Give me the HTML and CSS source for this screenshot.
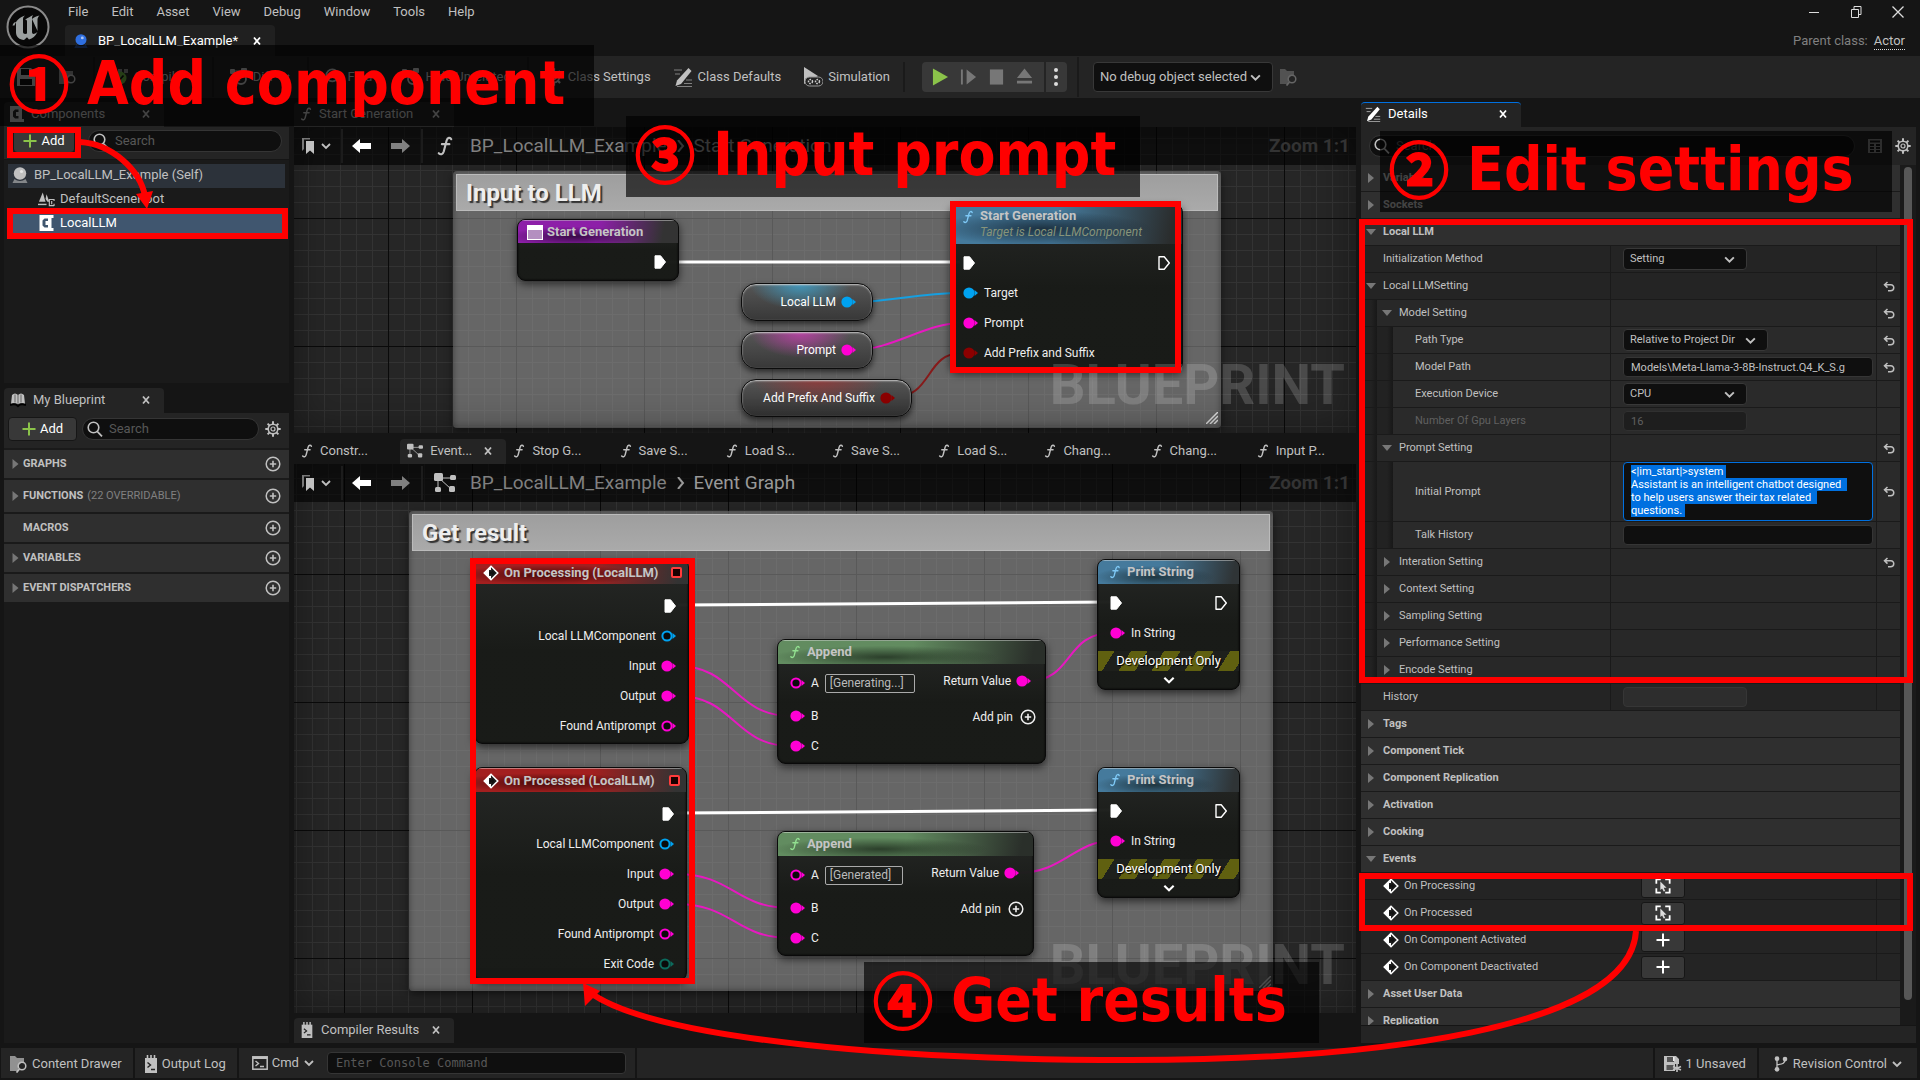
FILE: index.html
```html
<!DOCTYPE html>
<html lang="en">
<head>
<meta charset="utf-8">
<title>BP_LocalLLM_Example</title>
<link rel="stylesheet" href="styles.css">
</head>
<body>
<svg class="sprite" aria-hidden="true">
  <symbol id="i-f" viewBox="0 0 12 16"><path d="M11 2.6C10.2 1 8 1 7.3 3.6L5 12.4C4.300 14.800 2.400 15.200 1 13.800M3.500 6.500H9.500" fill="none" stroke="currentColor" stroke-width="1.700" stroke-linecap="round"/></symbol>
  <symbol id="i-chev" viewBox="0 0 12 12"><path d="M2 4l4 4 4-4" fill="none" stroke="currentColor" stroke-width="1.800"/></symbol>
  <symbol id="i-x" viewBox="0 0 10 10"><path d="M2 1.500L8 8.500M8 1.500L2 8.500" stroke="currentColor" stroke-width="1.800"/></symbol>
  <symbol id="i-search" viewBox="0 0 16 16"><circle cx="6.500" cy="6.500" r="5.300" fill="none" stroke="currentColor" stroke-width="1.600"/><path d="M10.300 10.500L15 15.400" stroke="currentColor" stroke-width="1.800"/></symbol>
  <symbol id="i-plus" viewBox="0 0 14 14"><path d="M7 0.500v13M.5 7h13" stroke="currentColor" stroke-width="2"/></symbol>
  <symbol id="i-pluscircle" viewBox="0 0 16 16"><circle cx="8" cy="8" r="6.800" fill="none" stroke="currentColor" stroke-width="1.500"/><path d="M8 4.800v6.400M4.800 8h6.400" stroke="currentColor" stroke-width="1.600"/></symbol>
  <symbol id="i-gear" viewBox="0 0 16 16"><circle cx="8" cy="8" r="4.800" fill="none" stroke="currentColor" stroke-width="1.600"/><circle cx="8" cy="8" r="2" fill="none" stroke="currentColor" stroke-width="1.200"/><path d="M8 .3v3M8 12.700v3M.3 8h3M12.700 8h3M2.600 2.600l2 2M11.400 11.400l2 2M13.400 2.600l-2 2M4.600 11.400l-2 2" stroke="currentColor" stroke-width="2"/></symbol>
  <symbol id="i-right" viewBox="0 0 7 10"><path d="M0.500 0L6.500 5 0.500 10z" fill="currentColor"/></symbol>
  <symbol id="i-down" viewBox="0 0 10 7"><path d="M0 .5h10L5 6.500z" fill="currentColor"/></symbol>
  <symbol id="i-exec" viewBox="0 0 12 14"><path d="M1 .8h5.600L11.500 7 6.600 13.200H1z" fill="#fff" stroke="#fff" stroke-linejoin="round"/></symbol>
  <symbol id="i-exec-open" viewBox="0 0 12 14"><path d="M1 .8h5.200L11.300 7 6.200 13.200H1z" fill="none" stroke="#fff" stroke-width="1.400" stroke-linejoin="round"/></symbol>
  <symbol id="i-pin" viewBox="0 0 15 12"><circle cx="6" cy="6" r="5.600" fill="currentColor"/><path d="M11.500 3L15 6l-3.500 3z" fill="currentColor"/></symbol>
  <symbol id="i-pin-open" viewBox="0 0 15 12"><circle cx="6" cy="6" r="4.600" fill="#0a0a0a" stroke="currentColor" stroke-width="2"/><path d="M11.500 3L15 6l-3.500 3z" fill="currentColor"/></symbol>
  <symbol id="i-event" viewBox="0 0 16 16"><path d="M8 1.200L14.800 8 8 14.800 1.200 8z" fill="#222" stroke="#fff" stroke-width="1.500"/><path d="M8 1.200V5H6v6h2v3.800L1.200 8z" fill="#fff"/><path d="M6 6.500h3v-1.500L12 8 9 11V9.500H6z" fill="#111"/></symbol>
  <symbol id="i-comp" viewBox="0 0 14 16"><path fill="currentColor" fill-rule="evenodd" d="M0 0h14v3h-2v10h2v3H0zM5 3.500L3 5.500v5l2 2h3.500v-2.500H6V6h2.500V3.500z"/></symbol>
  <symbol id="i-actor" viewBox="0 0 18 18"><circle cx="9" cy="7.500" r="6.200" fill="currentColor"/><circle cx="10.500" cy="5.500" r="1.600" fill="#fff" opacity=".6"/><path d="M3.500 13l-2 4h15l-2-4c-3 2.500-8 2.500-11 0z" fill="currentColor" opacity=".6"/></symbol>
  <symbol id="i-scene" viewBox="0 0 18 16"><path d="M5 1L1 11h7z" fill="currentColor"/><path d="M9 3l-1 5 2 3h2z" fill="currentColor"/><path d="M0 13h9v1.500H0z" fill="currentColor"/><path d="M17 8.500h-5V15h5M14.500 10v3.500M17 8v2M17 13v2.500" stroke="currentColor" fill="none" stroke-width="1.200"/></symbol>
  <symbol id="i-graph" viewBox="0 0 22 20"><path d="M5 5l12 11M6 5h11M4 6v11" stroke="currentColor" fill="none"/><rect x="0" y="0" width="9" height="8" rx="1.500" fill="currentColor"/><rect x="16" y="2" width="6" height="5" rx="1.500" fill="currentColor"/><rect x="1" y="14" width="6" height="5" rx="1.500" fill="currentColor"/><rect x="15" y="13" width="6" height="6" rx="1.500" fill="currentColor"/></symbol>
  <symbol id="i-book" viewBox="0 0 12 16"><path d="M0 0h8v1.500H2V11L0 13z" fill="#777"/><path d="M4 3h8v13l-4-3.500L4 16z" fill="currentColor"/></symbol>
  <symbol id="i-larrow" viewBox="0 0 19 14"><path d="M0 7L8 0v4h11v6H8v4z" fill="currentColor"/></symbol>
  <symbol id="i-rarrow" viewBox="0 0 19 14"><path d="M19 7L11 0v4H0v6h11v4z" fill="currentColor"/></symbol>
  <symbol id="i-pencil" viewBox="0 0 20 20"><path d="M15.500 1l3 3L8 17l-5.500 2 1.500-5.500z" fill="currentColor"/><path d="M1 3h8M2 7h5M13 13h6M11 16.500h8M4 19.500h15" stroke="currentColor" stroke-width="1.200" opacity=".6"/></symbol>
  <symbol id="i-browse" viewBox="0 0 18 18"><path d="M0 1h5l2 2h7v4a6 6 0 0 0-5 9H0z" fill="currentColor" opacity=".7"/><circle cx="12" cy="11" r="3.800" fill="none" stroke="currentColor" stroke-width="1.500"/><path d="M9.500 14l-3 3.500" stroke="currentColor" stroke-width="1.800"/></symbol>
  <symbol id="i-save" viewBox="0 0 18 18"><path d="M0 0h14l4 4v14H0z" fill="currentColor"/><path d="M4 1h8v6H4zM3 11h12v6H3z" fill="#111"/></symbol>
  <symbol id="i-unsaved" viewBox="0 0 18 18"><path d="M0 1h12l3 3v5h-4v7H0z" fill="currentColor"/><path d="M3 2h7v5H3zM2.500 10h7v5h-7z" fill="#555"/><path d="M9 2h1.500v4H9z" fill="#eee"/><path d="M13 9v8M9 11.500l8 3.500M17 11.500L9 15" stroke="currentColor" stroke-width="1.600"/></symbol>
  <symbol id="i-log" viewBox="0 0 14 18"><path d="M1 3h12v15H1z" fill="currentColor"/><path d="M3.500 0v4M7 0v4M10.500 0v4" stroke="currentColor" stroke-width="1.600"/><path d="M3.500 7.500L6.500 10l-3 2.500M7 14.500h4" stroke="#222" fill="none" stroke-width="1.400"/></symbol>
  <symbol id="i-cmd" viewBox="0 0 16 16"><rect x=".8" y="1.800" width="14.400" height="12.400" fill="none" stroke="currentColor" stroke-width="1.500"/><path d="M1 3h14" stroke="currentColor" stroke-width="2"/><path d="M3.500 6l3 2.500-3 2.500M8 11.500h4" stroke="currentColor" fill="none" stroke-width="1.400"/></symbol>
  <symbol id="i-branch" viewBox="0 0 16 18"><circle cx="3.500" cy="3" r="2.600" fill="currentColor"/><circle cx="3.500" cy="15" r="2.600" fill="currentColor"/><circle cx="12.500" cy="3.500" r="2.600" fill="currentColor"/><path d="M3.500 3v12M12.500 3c0 6-3 6-9 7" stroke="currentColor" stroke-width="1.500" fill="none"/></symbol>
  <symbol id="i-undo" viewBox="0 0 12 11"><path d="M4.500 1L1.500 3.800l3 2.800M1.500 3.800h6.300c4 0 4 6-.3 6H5" stroke="currentColor" stroke-width="1.500" fill="none"/></symbol>
  <symbol id="i-pick" viewBox="0 0 18 18"><path d="M1.500 6.500V1.500H6.500M11.500 1.500h5V6.500M16.500 11.500v5H11.500M6.500 16.500h-5V11.500" stroke="#fff" stroke-width="2" fill="none"/><path d="M6 4l7 7H9.800l1.700 3.500-1.700.8L8 11.700 6 13.500z" fill="#ddd"/></symbol>
  <symbol id="i-book2" viewBox="0 0 16 14"><path d="M2 2c2-2 4-2 6 0 2-2 4-2 6 0l1 9c-2-1-5-1-7 .5C6 10 3 10 1 11z" fill="currentColor"/><path d="M0 12c3-1 6-1 8 1 2-2 5-2 8-1" stroke="#000" stroke-width="2" fill="none"/><path d="M5 1.500v8M8 2v9M11 1.500v8" stroke="#666"/></symbol>
  <symbol id="i-table" viewBox="0 0 14 14"><path d="M0 0h14v14H0z" fill="currentColor"/><path d="M2 2.500h10M2 6h4M8 6h4M2 9h4M8 9h4M2 12h4M8 12h4" stroke="#161616" stroke-width="1.800"/></symbol>
  <symbol id="i-nodes" viewBox="0 0 18 18"><rect x="0" y="1" width="5" height="5" rx="1" fill="currentColor"/><rect x="11" y="0" width="6" height="5" rx="1" fill="currentColor"/><path d="M4 5l6 8M5 3h6" stroke="currentColor"/><circle cx="11" cy="11" r="5" fill="none" stroke="currentColor" stroke-width="1.800"/></symbol>
</svg>

<header class="titlebar">
  <svg class="logo" viewBox="0 0 44 44" role="img" aria-label="Unreal Engine"><circle cx="22" cy="22" r="20.500" fill="#080808" stroke="#8a8a8a" stroke-width="2"/><path d="M8.500 20.500C10 15.500 14 12 19 10.500c-1.500 1.300-2 2.300-2 4v12.500c0 1.500 1.800 2.600 4 1.500V16.500c0-1.500-.6-2-2-1.800 3-2 5.500-3.200 8.200-4.700-.9 1.200-1.200 2-1.200 3.500v13.500c0 1.500 1 2.200 2.500 1.800 1.200-.4 2-1 3-2-2 4.500-5 6.700-8.500 7.700l-2-2.200-3 2.700c-4.500-.3-8-3-8-7.500v-8.500c0-1.500-.3-2-1.200-1.700-.9.300-1.500 1.500-2.300 3.200zM26 14c2-2 5-3 7.500-3.500-1.500 1.500-2 2.700-2 4.500v11" fill="#9ba0a0"/></svg>
  <div class="title-main">
    <nav class="menu"><button>File</button><button>Edit</button><button>Asset</button><button>View</button><button>Debug</button><button>Window</button><button>Tools</button><button>Help</button></nav>
    <div class="doc-tab"><svg class="s16 blue"><use href="#i-actor"/></svg><span>BP_LocalLLM_Example*</span><button class="close" aria-label="Close"><svg><use href="#i-x"/></svg></button></div>
  </div>
  <div class="title-side">
    <div class="win"><button aria-label="Minimize"><svg viewBox="0 0 14 14"><path d="M2 7.500h10" stroke="#ddd"/></svg></button><button aria-label="Restore"><svg viewBox="0 0 14 14"><path d="M2.500 4.500h7v8h-7zM5 4V1.500h7v8H10" stroke="#ddd" fill="none"/></svg></button><button aria-label="Close window"><svg viewBox="0 0 14 14"><path d="M1.500 1.500l11 11M12.500 1.500l-11 11" stroke="#ddd" stroke-width="1.300"/></svg></button></div>
    <p class="parent">Parent class: <a href="#actor">Actor</a></p>
  </div>
</header>

<div class="toolbar">
  <button class="tool" aria-label="Save"><svg class="s18"><use href="#i-save"/></svg></button>
  <button class="tool second" aria-label="Browse"><svg class="s18"><use href="#i-browse"/></svg></button>
  <i class="sep"></i>
  <button class="tool compile"><svg class="s18" viewBox="0 0 18 18"><path d="M0 1h5v4H0zM7 1h4v4H7zM13 1h4v4h-4z" fill="#888"/><circle cx="9" cy="10" r="6.500" fill="#6db33f"/><path d="M5.500 10l2.500 2.500L12.500 7.500" stroke="#111" stroke-width="1.800" fill="none"/></svg>Compile</button>
  <i class="sep"></i>
  <button class="tool"><svg class="s18"><use href="#i-nodes"/></svg>Diff<svg class="s12"><use href="#i-chev"/></svg></button>
  <i class="sep"></i>
  <button class="tool"><svg class="s18"><use href="#i-search"/></svg>Find</button>
  <button class="tool hide"><svg class="s18"><use href="#i-nodes"/></svg>Hide Unrelated</button>
  <i class="sep"></i>
  <button class="tool"><svg class="s18"><use href="#i-gear"/></svg>Class Settings</button>
  <button class="tool"><svg class="s20"><use href="#i-pencil"/></svg>Class Defaults</button>
  <button class="tool"><svg class="s20" viewBox="0 0 20 20"><path d="M1 0l14 9L1 17z" fill="currentColor"/><rect x="2" y="10" width="18" height="9" rx="4.500" fill="#242424" stroke="#999"/><circle cx="7.500" cy="14.500" r="2" fill="none" stroke="#ccc" stroke-width="1.500" stroke-dasharray="1.500 1"/><circle cx="14.500" cy="14.500" r="2" fill="none" stroke="#ccc" stroke-width="1.500" stroke-dasharray="1.500 1"/></svg>Simulation</button>
  <i class="sep short"></i>
  <div class="play">
    <button aria-label="Play"><svg viewBox="0 0 18 18"><path d="M1 0l16 9L1 18z" fill="#8bc34a"/></svg></button>
    <button aria-label="Step"><svg viewBox="0 0 18 18"><path d="M1 1h2v16H1zM7 1l10 8-10 8z" fill="#777"/></svg></button>
    <button aria-label="Stop"><svg viewBox="0 0 18 18"><path d="M2 1h14v16H2z" fill="#777"/></svg></button>
    <button aria-label="Eject"><svg viewBox="0 0 18 18"><path d="M9 0l8 10H1zM1 13h16v3H1z" fill="#777"/></svg></button>
    <button class="dots" aria-label="Play options"><svg viewBox="0 0 6 18"><circle cx="3" cy="2" r="2"/><circle cx="3" cy="9" r="2"/><circle cx="3" cy="16" r="2"/></svg></button>
  </div>
  <i class="sep"></i>
  <div class="pick debug"><select aria-label="Debug object"><option>No debug object selected</option></select><svg><use href="#i-chev"/></svg></div>
  <svg class="s18 dim"><use href="#i-browse"/></svg>
</div>

<main class="main">
  <section class="left">
    <div class="tabs"><div class="tab on"><svg class="s14"><use href="#i-comp"/></svg><span>Components</span><button class="close" aria-label="Close"><svg><use href="#i-x"/></svg></button></div></div>
    <div class="panel components">
      <div class="tools"><button class="add"><svg><use href="#i-plus"/></svg>Add</button><label class="search"><svg><use href="#i-search"/></svg><input type="text" placeholder="Search" aria-label="Search components"></label></div>
      <ul class="tree">
        <li class="self"><svg class="s18"><use href="#i-actor"/></svg>BP_LocalLLM_Example (Self)</li>
        <li class="child"><svg class="s18"><use href="#i-scene"/></svg>DefaultSceneRoot</li>
        <li class="child sel"><svg class="s18"><use href="#i-comp"/></svg>LocalLLM</li>
      </ul>
    </div>
    <div class="tabs low"><div class="tab on"><svg class="s16"><use href="#i-book2"/></svg><span>My Blueprint</span><button class="close" aria-label="Close"><svg><use href="#i-x"/></svg></button></div></div>
    <div class="panel blueprint">
      <div class="tools"><button class="add wide"><svg><use href="#i-plus"/></svg>Add</button><label class="search"><svg><use href="#i-search"/></svg><input type="text" placeholder="Search" aria-label="Search blueprint"></label><button class="icon" aria-label="Settings"><svg class="s16"><use href="#i-gear"/></svg></button></div>
      <ul class="sections">
        <li><svg class="tri"><use href="#i-right"/></svg><b>GRAPHS</b><button class="icon" aria-label="Add graph"><svg class="s16"><use href="#i-pluscircle"/></svg></button></li>
        <li class="tall"><svg class="tri"><use href="#i-right"/></svg><b>FUNCTIONS</b><span>(22 OVERRIDABLE)</span><button class="icon" aria-label="Add function"><svg class="s16"><use href="#i-pluscircle"/></svg></button></li>
        <li><svg class="tri"></svg><b>MACROS</b><button class="icon" aria-label="Add macro"><svg class="s16"><use href="#i-pluscircle"/></svg></button></li>
        <li><svg class="tri"><use href="#i-right"/></svg><b>VARIABLES</b><button class="icon" aria-label="Add variable"><svg class="s16"><use href="#i-pluscircle"/></svg></button></li>
        <li><svg class="tri"><use href="#i-right"/></svg><b>EVENT DISPATCHERS</b><button class="icon" aria-label="Add dispatcher"><svg class="s16"><use href="#i-pluscircle"/></svg></button></li>
      </ul>
    </div>
  </section>

  <section class="center">
    <div class="tabs"><div class="tab on"><svg class="f"><use href="#i-f"/></svg><span>Start Generation</span><button class="close" aria-label="Close"><svg><use href="#i-x"/></svg></button></div></div>
    <div class="canvas one">
      <div class="comment c1"><h2>Input to LLM</h2></div>
      <svg class="handle h1" viewBox="0 0 12 12"><path d="M0 12L12 0M4 12l8-8M8 12l4-4" stroke="#ddd" stroke-width="1.500"/></svg>
      <svg class="wires"><g fill="none"><path d="M370 135H666" stroke="#fff" stroke-width="3"/><path d="M558 175C600 175 620 166 668 166" stroke="#169fe0" stroke-width="2"/><path d="M558 223C600 223 630 196 668 196" stroke="#e619c0" stroke-width="2"/><path d="M597 271C640 271 630 226 668 226" stroke="#861a1a" stroke-width="2"/></g></svg>
      <article class="node entry"><h3><svg class="box" viewBox="0 0 16 15"><rect x=".5" y=".5" width="15" height="14" fill="#b48fc0" stroke="#fff"/><path d="M0 0h16v5H0z" fill="#fff"/></svg>Start Generation</h3><div class="pins"><p class="out"><svg class="ex"><use href="#i-exec"/></svg></p></div></article>
      <article class="var v1"><span>Local LLM</span><svg class="pin obj"><use href="#i-pin"/></svg></article>
      <article class="var v2"><span>Prompt</span><svg class="pin str"><use href="#i-pin"/></svg></article>
      <article class="var v3"><span>Add Prefix And Suffix</span><svg class="pin bool"><use href="#i-pin"/></svg></article>
      <article class="node call"><h3 class="double"><svg class="f"><use href="#i-f"/></svg><span>Start Generation<em>Target is Local LLMComponent</em></span></h3>
        <div class="pins"><p class="both"><svg class="ex"><use href="#i-exec"/></svg><svg class="ex"><use href="#i-exec-open"/></svg></p><p><svg class="pin obj"><use href="#i-pin"/></svg>Target</p><p><svg class="pin str"><use href="#i-pin"/></svg>Prompt</p><p><svg class="pin bool"><use href="#i-pin"/></svg>Add Prefix and Suffix</p></div></article>
      <div class="mark">BLUEPRINT</div>
      <div class="crumbs"><button class="icon bm" aria-label="Bookmarks"><svg><use href="#i-book"/></svg><svg class="s12"><use href="#i-chev"/></svg></button><i></i><button class="icon" aria-label="Back"><svg class="arr white"><use href="#i-larrow"/></svg></button><button class="icon" aria-label="Forward"><svg class="arr"><use href="#i-rarrow"/></svg></button><i></i><svg class="kind"><use href="#i-f"/></svg><span>BP_LocalLLM_Example</span><svg class="s12"><path d="M3 0l5 6-5 6" fill="none" stroke="#999" stroke-width="2"/></svg><span class="here">Start Generation</span><b>Zoom 1:1</b></div>
    </div>
    <div class="tabs many">
      <div class="tab"><svg class="f"><use href="#i-f"/></svg><span>Constr...</span></div>
      <div class="tab on"><svg class="s16"><use href="#i-graph"/></svg><span>Event...</span><button class="close" aria-label="Close"><svg><use href="#i-x"/></svg></button></div>
      <div class="tab"><svg class="f"><use href="#i-f"/></svg><span>Stop G...</span></div>
      <div class="tab"><svg class="f"><use href="#i-f"/></svg><span>Save S...</span></div>
      <div class="tab"><svg class="f"><use href="#i-f"/></svg><span>Load S...</span></div>
      <div class="tab"><svg class="f"><use href="#i-f"/></svg><span>Save S...</span></div>
      <div class="tab"><svg class="f"><use href="#i-f"/></svg><span>Load S...</span></div>
      <div class="tab"><svg class="f"><use href="#i-f"/></svg><span>Chang...</span></div>
      <div class="tab"><svg class="f"><use href="#i-f"/></svg><span>Chang...</span></div>
      <div class="tab"><svg class="f"><use href="#i-f"/></svg><span>Input P...</span></div>
    </div>
    <div class="canvas two">
      <div class="comment c2"><h2>Get result</h2></div>
      <svg class="handle h2" viewBox="0 0 12 12"><path d="M0 12L12 0M4 12l8-8M8 12l4-4" stroke="#ddd" stroke-width="1.500"/></svg>
      <svg class="wires"><g fill="none" stroke="#e619c0" stroke-width="2"><path d="M384 141L816 138" stroke="#fff" stroke-width="3"/><path d="M381 349L816 346" stroke="#fff" stroke-width="3"/><path d="M384 202C440 202 440 252 497 252"/><path d="M384 232C440 232 440 282 497 282"/><path d="M381 410C440 410 440 444 497 444"/><path d="M381 440C440 440 440 474 497 474"/><path d="M734 217C780 217 770 169 818 169"/><path d="M723 409C770 409 780 377 818 377"/></g></svg>
      <article class="node ev e1"><h3><svg class="s16"><use href="#i-event"/></svg>On Processing (LocalLLM)<i></i></h3><div class="pins"><p class="out"><svg class="ex"><use href="#i-exec"/></svg></p><p class="out">Local LLMComponent<svg class="pin obj"><use href="#i-pin-open"/></svg></p><p class="out">Input<svg class="pin str"><use href="#i-pin"/></svg></p><p class="out">Output<svg class="pin str"><use href="#i-pin"/></svg></p><p class="out">Found Antiprompt<svg class="pin str"><use href="#i-pin-open"/></svg></p></div></article>
      <article class="node ev e2"><h3><svg class="s16"><use href="#i-event"/></svg>On Processed (LocalLLM)<i></i></h3><div class="pins"><p class="out"><svg class="ex"><use href="#i-exec"/></svg></p><p class="out">Local LLMComponent<svg class="pin obj"><use href="#i-pin-open"/></svg></p><p class="out">Input<svg class="pin str"><use href="#i-pin"/></svg></p><p class="out">Output<svg class="pin str"><use href="#i-pin"/></svg></p><p class="out">Found Antiprompt<svg class="pin str"><use href="#i-pin-open"/></svg></p><p class="out">Exit Code<svg class="pin int"><use href="#i-pin-open"/></svg></p></div></article>
      <article class="node pure a1"><h3><svg class="f"><use href="#i-f"/></svg>Append</h3><div class="pins split"><div><p><svg class="pin str"><use href="#i-pin-open"/></svg><label for="a1">A</label><input id="a1" class="lit long" value="[Generating...]"></p><p><svg class="pin str"><use href="#i-pin"/></svg>B</p><p><svg class="pin str"><use href="#i-pin"/></svg>C</p></div><div><p class="out">Return Value<svg class="pin str"><use href="#i-pin"/></svg></p><p class="out addpin"><button>Add pin<svg class="s16"><use href="#i-pluscircle"/></svg></button></p></div></div></article>
      <article class="node pure a2"><h3><svg class="f"><use href="#i-f"/></svg>Append</h3><div class="pins split"><div><p><svg class="pin str"><use href="#i-pin-open"/></svg><label for="a2">A</label><input id="a2" class="lit" value="[Generated]"></p><p><svg class="pin str"><use href="#i-pin"/></svg>B</p><p><svg class="pin str"><use href="#i-pin"/></svg>C</p></div><div><p class="out">Return Value<svg class="pin str"><use href="#i-pin"/></svg></p><p class="out addpin"><button>Add pin<svg class="s16"><use href="#i-pluscircle"/></svg></button></p></div></div></article>
      <article class="node print p1"><h3><svg class="f"><use href="#i-f"/></svg>Print String</h3><div class="pins"><p class="both"><svg class="ex"><use href="#i-exec"/></svg><svg class="ex"><use href="#i-exec-open"/></svg></p><p><svg class="pin str"><use href="#i-pin"/></svg>In String</p></div><div class="dev">Development Only</div><svg class="more"><use href="#i-chev"/></svg></article>
      <article class="node print p2"><h3><svg class="f"><use href="#i-f"/></svg>Print String</h3><div class="pins"><p class="both"><svg class="ex"><use href="#i-exec"/></svg><svg class="ex"><use href="#i-exec-open"/></svg></p><p><svg class="pin str"><use href="#i-pin"/></svg>In String</p></div><div class="dev">Development Only</div><svg class="more"><use href="#i-chev"/></svg></article>
      <div class="mark">BLUEPRINT</div>
      <div class="crumbs"><button class="icon bm" aria-label="Bookmarks"><svg><use href="#i-book"/></svg><svg class="s12"><use href="#i-chev"/></svg></button><i></i><button class="icon" aria-label="Back"><svg class="arr white"><use href="#i-larrow"/></svg></button><button class="icon" aria-label="Forward"><svg class="arr"><use href="#i-rarrow"/></svg></button><i></i><svg class="kind"><use href="#i-graph"/></svg><span>BP_LocalLLM_Example</span><svg class="s12"><path d="M3 0l5 6-5 6" fill="none" stroke="#999" stroke-width="2"/></svg><span class="here">Event Graph</span><b>Zoom 1:1</b></div>
    </div>
    <div class="tabs low"><div class="tab on"><svg class="s14"><use href="#i-log"/></svg><span>Compiler Results</span><button class="close" aria-label="Close"><svg><use href="#i-x"/></svg></button></div></div>
  </section>

  <section class="right">
    <div class="tabs"><div class="tab on active"><svg class="s16"><use href="#i-pencil"/></svg><span>Details</span><button class="close" aria-label="Close"><svg><use href="#i-x"/></svg></button></div></div>
    <div class="tools details-tools"><label class="search"><svg><use href="#i-search"/></svg><input type="text" placeholder="Search" aria-label="Search details"></label><button class="icon" aria-label="Property matrix"><svg class="s14"><use href="#i-table"/></svg></button><button class="icon" aria-label="Settings"><svg class="s16"><use href="#i-gear"/></svg></button></div>
    <div class="scroll">
      <div class="rows">
        <div class="cat"><svg class="tri"><use href="#i-right"/></svg>Variable</div>
        <div class="cat"><svg class="tri"><use href="#i-right"/></svg>Sockets</div>
        <div class="cat"><svg class="tri"><use href="#i-down"/></svg>Local LLM</div>
        <div class="row"><div class="name"><label for="init">Initialization Method</label></div><div class="val"><div class="pick"><select id="init"><option>Setting</option></select><svg><use href="#i-chev"/></svg></div></div><div class="rst"></div></div>
        <div class="row"><div class="name"><svg class="tri"><use href="#i-down"/></svg>Local LLMSetting</div><div class="val"></div><div class="rst"><svg><use href="#i-undo"/></svg></div></div>
        <div class="row l2"><div class="name"><svg class="tri"><use href="#i-down"/></svg>Model Setting</div><div class="val"></div><div class="rst"><svg><use href="#i-undo"/></svg></div></div>
        <div class="row l3"><div class="name"><label for="ptype">Path Type</label></div><div class="val"><div class="pick path"><select id="ptype"><option>Relative to Project Dir</option></select><svg><use href="#i-chev"/></svg></div></div><div class="rst"><svg><use href="#i-undo"/></svg></div></div>
        <div class="row l3"><div class="name"><label for="mpath">Model Path</label></div><div class="val"><input id="mpath" class="field" value="Models\Meta-Llama-3-8B-Instruct.Q4_K_S.g"></div><div class="rst"><svg><use href="#i-undo"/></svg></div></div>
        <div class="row l3"><div class="name"><label for="dev">Execution Device</label></div><div class="val"><div class="pick"><select id="dev"><option>CPU</option></select><svg><use href="#i-chev"/></svg></div></div><div class="rst"></div></div>
        <div class="row l3 off"><div class="name"><label for="gpu">Number Of Gpu Layers</label></div><div class="val"><input id="gpu" class="field small" value="16" disabled></div><div class="rst"></div></div>
        <div class="row l2"><div class="name"><svg class="tri"><use href="#i-down"/></svg>Prompt Setting</div><div class="val"></div><div class="rst"><svg><use href="#i-undo"/></svg></div></div>
        <div class="row l3 big"><div class="name"><label for="prompt">Initial Prompt</label></div><div class="val"><textarea id="prompt" class="field area" spellcheck="false">&lt;|im_start|&gt;system
Assistant is an intelligent chatbot designed to help users answer their tax related questions. </textarea></div><div class="rst"><svg><use href="#i-undo"/></svg></div></div>
        <div class="row l3"><div class="name"><label for="talk">Talk History</label></div><div class="val"><input id="talk" class="field"></div><div class="rst"></div></div>
        <div class="row l2"><div class="name"><svg class="tri"><use href="#i-right"/></svg>Interation Setting</div><div class="val"></div><div class="rst"><svg><use href="#i-undo"/></svg></div></div>
        <div class="row l2"><div class="name"><svg class="tri"><use href="#i-right"/></svg>Context Setting</div><div class="val"></div><div class="rst"></div></div>
        <div class="row l2"><div class="name"><svg class="tri"><use href="#i-right"/></svg>Sampling Setting</div><div class="val"></div><div class="rst"></div></div>
        <div class="row l2"><div class="name"><svg class="tri"><use href="#i-right"/></svg>Performance Setting</div><div class="val"></div><div class="rst"></div></div>
        <div class="row l2"><div class="name"><svg class="tri"><use href="#i-right"/></svg>Encode Setting</div><div class="val"></div><div class="rst"></div></div>
        <div class="row"><div class="name"><label for="hist">History</label></div><div class="val"><input id="hist" class="field small flat" disabled></div><div class="rst"></div></div>
        <div class="cat"><svg class="tri"><use href="#i-right"/></svg>Tags</div>
        <div class="cat"><svg class="tri"><use href="#i-right"/></svg>Component Tick</div>
        <div class="cat"><svg class="tri"><use href="#i-right"/></svg>Component Replication</div>
        <div class="cat"><svg class="tri"><use href="#i-right"/></svg>Activation</div>
        <div class="cat"><svg class="tri"><use href="#i-right"/></svg>Cooking</div>
        <div class="cat"><svg class="tri"><use href="#i-down"/></svg>Events</div>
        <div class="row event"><div class="name"><svg class="s16"><use href="#i-event"/></svg>On Processing</div><div class="val"><button aria-label="View event"><svg class="s16"><use href="#i-pick"/></svg></button></div><div class="rst"></div></div>
        <div class="row event"><div class="name"><svg class="s16"><use href="#i-event"/></svg>On Processed</div><div class="val"><button aria-label="View event"><svg class="s16"><use href="#i-pick"/></svg></button></div><div class="rst"></div></div>
        <div class="row event"><div class="name"><svg class="s16"><use href="#i-event"/></svg>On Component Activated</div><div class="val"><button aria-label="Add event"><svg class="s14"><use href="#i-plus"/></svg></button></div><div class="rst"></div></div>
        <div class="row event"><div class="name"><svg class="s16"><use href="#i-event"/></svg>On Component Deactivated</div><div class="val"><button aria-label="Add event"><svg class="s14"><use href="#i-plus"/></svg></button></div><div class="rst"></div></div>
        <div class="cat"><svg class="tri"><use href="#i-right"/></svg>Asset User Data</div>
        <div class="cat"><svg class="tri"><use href="#i-right"/></svg>Replication</div>
      </div>
      <div class="bar"><i></i></div>
    </div>
    <div class="foot"></div>
  </section>
</main>

<footer class="status">
  <button><svg class="s18"><use href="#i-browse"/></svg>Content Drawer</button>
  <button><svg class="s18 narrow"><use href="#i-log"/></svg>Output Log</button>
  <div class="console"><button><svg class="s16"><use href="#i-cmd"/></svg>Cmd<svg class="s12"><use href="#i-chev"/></svg></button><input type="text" placeholder="Enter Console Command" aria-label="Console command"></div>
  <div class="fill"></div>
  <button><svg class="s18"><use href="#i-unsaved"/></svg>1 Unsaved</button>
  <button class="rev"><svg class="s16"><use href="#i-branch"/></svg>Revision Control<svg class="s12"><use href="#i-chev"/></svg></button>
</footer>

<div class="notes">
  <div class="note n1"><span>①</span>Add component</div>
  <div class="note n2"><span>②</span>Edit settings</div>
  <div class="note n3"><span>③</span>Input prompt</div>
  <div class="note n4"><span>④</span>Get results</div>
  <div class="frame f1"></div><div class="frame f2"></div><div class="frame f3"></div><div class="frame f4"></div><div class="frame f5"></div><div class="frame f6"></div>
  <svg class="arrows"><g fill="none" stroke="#f00" stroke-width="6"><path d="M80 142C112 144 140 170 145 196"/><path d="M1636 931C1630 1030 1370 1060 1130 1060C900 1060 660 1040 592 994"/></g><path d="M136 194l17-3-6 18zM583 983l17 8-15 15z" fill="#f00"/></svg>
</div>
<script src="app.js"></script>
</body>
</html>
```
FILE: app.js
```js
const prompt = document.getElementById('prompt');
prompt.focus({ preventScroll: true });
prompt.select();
```
FILE: styles.css
```css
* { box-sizing: border-box; }
html, body { height: 100%; }
body { margin: 0; display: flex; flex-direction: column; position: relative; overflow: hidden; background: #151515; color: #c0c0c0; font: 13px/16px Roboto, sans-serif; }
button { font: inherit; color: inherit; background: none; border: 0; padding: 0; display: inline-flex; align-items: center; justify-content: center; }
input, select, textarea { font: inherit; color: inherit; min-width: 0; outline: 0; }
ul, p, h2, h3 { margin: 0; padding: 0; list-style: none; }
svg { display: block; flex: none; }
.sprite { position: absolute; width: 0; height: 0; }
.s12 { width: 12px; height: 12px; }
.s14 { width: 14px; height: 16px; }
.s16 { width: 16px; height: 16px; }
.s18 { width: 18px; height: 18px; }
.s20 { width: 20px; height: 20px; }
.blue { color: #2f6fe0; }
.dim { color: #666; }
.close { margin-left: auto; }
.close svg { width: 10px; height: 10px; }

.titlebar { height: 56px; flex: none; display: flex; padding: 0 12px 0 6px; }
.logo { width: 44px; height: 44px; margin-top: 5px; }
.title-main { flex: 1; display: flex; flex-direction: column; justify-content: space-between; padding-left: 15px; }
.menu { display: flex; gap: 23px; padding: 4px 3px; }
.doc-tab { width: 210px; height: 31px; background: #202020; border-radius: 4px 4px 0 0; display: flex; align-items: center; gap: 9px; padding: 0 13px 0 8px; color: #fff; }
.title-side { display: flex; flex-direction: column; align-items: flex-end; gap: 14px; padding: 5px 3px 0; }
.win { display: flex; gap: 28px; }
.win svg { width: 14px; height: 14px; }
.parent { color: #808080; display: flex; gap: 6px; }
.parent a { color: #c0c0c0; text-decoration: none; border-bottom: 1px dotted #ddd; }

.toolbar { height: 42px; flex: none; background: #242424; display: flex; align-items: center; padding-left: 17px; gap: 10px; }
.tool { gap: 5px; margin: 0 6px; }
.toolbar > .tool:first-child { margin-left: 0; }
.toolbar > .dim { margin-left: -3px; }
.second { margin-left: 8px; }
.compile { padding-right: 14px; }
.hide { padding: 0 0 0 8px; }
.sep { width: 2px; height: 40px; background: #1a1a1a; }
.sep.short { height: 30px; margin: 0 7px 0 -3px; }
.play { height: 30px; display: flex; background: #383838; border-radius: 4px; padding-left: 10px; gap: 11px; }
.play svg { width: 17px; height: 18px; }
.play .dots { width: 23px; border-left: 2px solid #242424; }
.play .dots svg { width: 6px; fill: #ddd; }
.pick { position: relative; width: 124px; }
.pick select { appearance: none; width: 100%; height: 22px; background: #0f0f0f; border: 1px solid #383838; border-radius: 4px; padding: 0 8px 0 6px; display: block; }
.pick svg { position: absolute; right: 11px; top: 5px; width: 13px; height: 13px; pointer-events: none; }
.pick.debug { width: 180px; margin-left: 4px; }
.debug select { height: 30px; }
.debug svg { top: 9px; }

.main { flex: 1; min-height: 0; display: grid; grid-template-columns: 285px minmax(0, 1fr) 555px; gap: 5px; padding: 0 4px; }
.left, .center, .right { display: flex; flex-direction: column; min-height: 0; }
.tabs { height: 29px; flex: none; display: flex; align-items: flex-end; }
.tabs.low { height: 30px; }
.tabs.many { height: 31px; display: grid; grid-template-columns: repeat(10, minmax(0, 1fr)); }
.tab { width: 160px; height: 25px; border-radius: 4px 4px 0 0; display: flex; align-items: center; gap: 7px; padding: 0 13px 2px 6px; white-space: nowrap; }
.tab.on { background: #242424; }
.tab.active { color: #fff; border-top: 1px solid #0070e0; padding-left: 4px; }
.tab .f { width: 12px; height: 14px; }
.many .tab { width: auto; padding: 0 13px 2px 7px; }

.tools { display: flex; align-items: center; background: #242424; }
.add { flex: none; width: 62px; height: 24px; background: #383838; border: 1px solid #161616; border-radius: 4px; color: #fff; gap: 4px; }
.add.wide { width: 69px; }
.add svg { width: 14px; height: 14px; color: #8bc34a; }
.search { flex: 1; min-width: 0; height: 22px; display: flex; align-items: center; gap: 6px; background: #0f0f0f; border: 1px solid #353535; border-radius: 11px; padding: 0 4px; color: #c0c0c0; }
.search svg { width: 16px; height: 16px; }
.search input { flex: 1; background: none; border: 0; padding: 0; }
::placeholder { color: #575757; opacity: 1; }
.icon { flex: none; color: #c0c0c0; }
.panel { background: #1a1a1a; }
.components { flex: 0 0 256px; }
.components .tools { height: 32px; padding: 0 7px 4px 9px; gap: 13px; }
.tree { padding: 4px 4px 0; border-top: 1px solid #151515; }
.tree li { height: 24px; display: flex; align-items: center; gap: 7px; padding: 0 0 2px 3px; }
.tree .self { background: #2c323a; gap: 5px; }
.tree .child { padding-left: 30px; gap: 5px; }
.tree .child .s18 { width: 17px; height: 16px; }
.tree .sel { background: #40566f; color: #fff; }
.blueprint { flex: 1; }
.blueprint .tools { height: 35px; padding: 0 8px 3px 4px; gap: 5px; }
.blueprint .search { margin-right: 1px; }
.sections { display: grid; gap: 2px; padding-top: 2px; font-size: 11px; }
.sections li { height: 28px; background: #2f2f2f; display: flex; align-items: center; gap: 4px; padding: 0 8px; }
.sections .tall { height: 32px; }
.sections .icon { margin-left: auto; }
.sections span { color: #808080; }
.tri { width: 7px; height: 10px; color: #777; }

.canvas { position: relative; min-height: 0; overflow: hidden; background-color: #262626; background-image: linear-gradient(#0a0a0a 1px, transparent 1px), linear-gradient(90deg, #0a0a0a 1px, transparent 1px), linear-gradient(#333 1px, transparent 1px), linear-gradient(90deg, #333 1px, transparent 1px); background-size: 128px 128px, 128px 128px, 16px 16px, 16px 16px; }
.canvas::after { content: ""; position: absolute; inset: 0; box-shadow: inset 0 0 40px rgba(0,0,0,.4); pointer-events: none; }
.one { flex: 306 1 0; background-position: 94px 91px; }
.two { flex: 549 1 0; background-position: 50px 110px; }
.crumbs { position: absolute; inset: 0 0 auto; height: 38px; z-index: 3; background: rgba(0,0,0,.6); display: flex; align-items: center; padding: 0 6px 0 8px; color: #808080; font-size: 19px; line-height: 24px; }
.bm { gap: 6px; color: #c0c0c0; margin-right: 9px; }
.bm svg:first-child { width: 12px; height: 16px; }
.crumbs i { width: 2px; height: 34px; background: #1c1c1c; margin-right: 9px; }
.arr { width: 19px; height: 14px; color: #808080; margin-right: 11px; }
.arr.white { color: #fff; margin-right: 20px; }
.kind { width: 22px; height: 20px; color: #c0c0c0; margin: 0 14px 0 2px; }
.crumbs > .s12 { margin: 0 7px 0 8px; }
.here { color: #999; }
.crumbs b { margin-left: auto; color: #333; }
.comment { position: absolute; background: rgba(155,155,155,.55); padding: 3px; box-shadow: inset 0 0 6px rgba(0,0,0,.4), 0 3px 8px rgba(0,0,0,.5); border-radius: 4px; }
.comment h2 { height: 37px; background: linear-gradient(#9e9e9e, #aaa); border: 1px solid #bbb; padding-left: 9px; font-size: 24px; line-height: 36px; color: #eee; text-shadow: 2px 2px 1px #333; }
.c1 { left: 159px; top: 44px; width: 768px; height: 257px; }
.c2 { left: 115px; top: 47px; width: 864px; height: 480px; }
.handle { position: absolute; width: 12px; height: 12px; }
.h1 { left: 912px; top: 285px; }
.h2 { left: 965px; top: 512px; }
.wires { position: absolute; inset: 0; width: 100%; height: 100%; }
.mark { position: absolute; right: 11px; bottom: 18px; font: bold 56px/60px Roboto, sans-serif; color: rgba(255,255,255,.17); }
.node { position: absolute; border: 1px solid #0a0a0a; border-radius: 8px; overflow: hidden; background: linear-gradient(rgba(36,38,36,.97), rgba(24,26,23,.99) 50%); box-shadow: 0 3px 8px rgba(0,0,0,.6), inset 0 0 2px #000; color: #eee; font-size: 12px; }
.node h3 { height: 24px; display: flex; align-items: center; gap: 7px; padding: 0 12px 1px; font-size: 13px; font-weight: bold; color: #c5c5c5; border-top: 1px solid rgba(255,255,255,.4); white-space: nowrap; }
.node .f { width: 10px; height: 14px; }
.pins { padding-top: 4px; }
.pins p { height: 30px; display: flex; align-items: center; gap: 6px; padding: 0 12px; }
.pins .out { justify-content: flex-end; gap: 5px; }
.pins .both { justify-content: space-between; }
.ex { width: 12px; height: 14px; }
.pin { width: 15px; height: 12px; }
.obj { color: #00a2f0; }
.str { color: #ff00d4; }
.bool { color: #8c0000; }
.int { color: #0c6b5c; }
.entry { left: 223px; top: 92px; width: 162px; height: 62px; }
.entry h3 { height: 23px; gap: 4px; padding: 0 9px; background: radial-gradient(ellipse at 35% 70%, rgba(20,0,30,.7), transparent 45%), linear-gradient(100deg, #8d1fa8 50%, #333 90%); }
.box { width: 16px; height: 15px; }
.call { left: 656px; top: 77px; width: 233px; height: 167px; }
.call h3 { height: 39px; align-items: flex-start; background: radial-gradient(ellipse at 40% 60%, rgba(15,25,35,.75), transparent 55%), linear-gradient(100deg, #457a9c 45%, #2a2c2c 95%); }
.call h3 .f { margin-top: 4px; color: #7ec8f5; }
.call em { display: block; font-weight: normal; font-size: 12px; color: #87947a; line-height: 17px; }
.call h3 span { padding-top: 2px; }
.print h3, .pure h3 { background: radial-gradient(ellipse at 40% 70%, rgba(15,25,25,.7), transparent 50%), linear-gradient(100deg, #457a9c 45%, #2f3436 95%); }
.print .f { color: #7ec8f5; }
.pure h3 { background: radial-gradient(ellipse at 40% 70%, rgba(20,30,20,.7), transparent 50%), linear-gradient(100deg, #628c60 50%, #2a2f2a 95%); }
.pure .f { color: #92e090; }
.ev h3 { gap: 5px; padding: 0 8px; background: radial-gradient(ellipse at 35% 60%, rgba(30,0,0,.7), transparent 50%), linear-gradient(100deg, #a31f1f 55%, #333 95%); }
.ev h3 i { width: 11px; height: 11px; margin: 0 -2px 0 auto; border: 2px solid #ff3b3b; border-radius: 2px; background: #1a0000; }
.ev .pins { padding-top: 7px; }
.e1 { left: 180px; top: 95px; width: 215px; height: 185px; }
.e2 { left: 180px; top: 303px; width: 213px; height: 214px; }
.a1 { left: 483px; top: 175px; width: 269px; height: 125px; }
.a2 { left: 483px; top: 367px; width: 257px; height: 125px; }
.split { display: flex; justify-content: space-between; padding-top: 1px; }
.split > div > p:first-child { height: 36px; }
.split > div > .out:first-child { height: 32px; padding-right: 14px; }
.split .addpin { height: 40px; padding-right: 9px; }
.addpin button { gap: 7px; }
.split > div:first-child p { padding-right: 0; }
.lit { width: 78px; height: 19px; background: none; border: 1px solid #aaa; border-radius: 2px; padding: 0 4px; color: #bbb; }
.lit.long { width: 90px; }
.p1, .p2 { left: 803px; width: 143px; height: 131px; }
.p1 { top: 95px; }
.p2 { top: 303px; }
.dev { height: 20px; margin-top: 3px; text-align: center; line-height: 20px; color: #fff; text-shadow: 1px 1px 1px #000; font-size: 13px; background: repeating-linear-gradient(122deg, #606010 0 14px, #1e201c 14px 28px); }
.more { width: 14px; height: 14px; margin: 2px auto 0; color: #fff; }
.var { position: absolute; width: 132px; height: 38px; border: 1px solid #0c0c0c; border-radius: 15px; display: flex; align-items: center; justify-content: flex-end; gap: 5px; padding-right: 16px; font-size: 12px; color: #fff; box-shadow: 0 3px 6px rgba(0,0,0,.6), inset 0 1px 2px #ccc; }
.v1 { left: 447px; top: 156px; background: radial-gradient(ellipse at 45% 0, #4097bb, transparent 50%), linear-gradient(#565656, #383838); }
.v2 { left: 447px; top: 204px; background: radial-gradient(ellipse at 45% 0, #b640a2, transparent 50%), linear-gradient(#565656, #383838); }
.v3 { left: 447px; top: 252px; width: 171px; background: radial-gradient(ellipse at 45% 0, #8c3c3c, transparent 50%), linear-gradient(#565656, #333); }

.details-tools { height: 38px; padding: 0 5px 0 8px; gap: 13px; }
.details-tools .icon { width: 14px; }
.details-tools .icon .s14 { height: 14px; color: #808080; }
.details-tools .icon + .icon { width: 16px; }
.scroll { flex: 1; min-height: 0; display: flex; background: #1a1a1a; overflow: hidden; }
.rows { flex: 1; font-size: 11px; line-height: 14px; }
.cat { height: 27px; border-bottom: 1px solid #1a1a1a; background: #2f2f2f; display: flex; align-items: center; padding-left: 5px; gap: 7px; font-weight: bold; }
.cat .tri, .name .tri { width: 10px; height: 10px; }
.row { height: 27px; display: grid; grid-template-columns: 249px minmax(0, 1fr) 24px; border-bottom: 1px solid #1a1a1a; background: #242424; }
.row > div { display: flex; align-items: center; }
.name { gap: 7px; padding-left: 5px; }
.name label { padding-left: 17px; }
.val { border-left: 1px solid #1a1a1a; padding: 0 3px 0 12px; }
.rst { border-left: 1px solid #1a1a1a; justify-content: center; }
.rst svg { width: 12px; height: 11px; }
.l2 { background: linear-gradient(90deg, #222 0 10px, #181818 16px, #282828 16px); }
.l2 .name { padding-left: 21px; }
.l3 { background: linear-gradient(90deg, #222 0 10px, #181818 16px, #222 16px 26px, #181818 32px, #2a2a2a 32px); }
.l3 .name { padding-left: 37px; }
.row.big { height: 60px; }
.off { color: #606060; }
.field { width: 100%; height: 20px; background: #0f0f0f; border: 1px solid #353535; border-radius: 4px; padding: 0 7px; }
.field.small { width: 124px; background: #1e1e1e; border-color: #303030; }
.field.small.flat { background: #2d2d2d; border-color: #363636; }
.path { width: 145px; }
.field.area { height: 59px; resize: none; border-color: #0070e0; padding: 2px 24px 2px 7px; line-height: 13px; overflow: hidden; color: #fff; }
.area::selection { background: #0070e0; color: #fff; }
.event .val { border: 0; padding-left: 31px; }
.event .name { padding-left: 22px; gap: 5px; }
.event .val button { width: 44px; height: 23px; background: #383838; border: 1px solid #161616; border-radius: 3px; color: #fff; }
.bar { width: 16px; padding: 2px 4px 25px; display: flex; }
.bar i { flex: 1; background: #575757; border-radius: 4px; }
.foot { height: 18px; background: #242424; border-top: 1px solid #151515; }

.status { height: 30px; flex: none; margin: 5px 3px 2px 1px; display: flex; gap: 2px; }
.status > * { background: #242424; }
.status > button { gap: 4px; padding: 2px 11px 0 9px; }
.status .narrow { width: 14px; }
.console { display: flex; align-items: center; gap: 12px; padding: 0 9px 0 13px; }
.console button { gap: 4px; }
.console input { width: 299px; height: 22px; background: #0f0f0f; border: 1px solid #353535; border-radius: 4px; padding: 0 8px; font: 12px/16px "DejaVu Sans Mono", monospace; }
.fill { flex: 1; }
.status .rev { padding: 2px 14px 0; }

.notes { position: absolute; inset: 0; pointer-events: none; z-index: 5; }
.note { position: absolute; height: 81px; background: rgba(0,0,0,.65); color: #f00; font: bold 60px/76px "DejaVu Sans Condensed", "Noto Sans", sans-serif; white-space: nowrap; display: flex; gap: 18px; padding-left: 9px; }
.note span { font: bold 60px/72px "Noto Sans CJK JP", sans-serif; -webkit-text-stroke: 2px #f00; }
.n1 { left: 0; top: 45px; width: 594px; }
.n2 { left: 1380px; top: 131px; width: 512px; }
.n3 { left: 626px; top: 116px; width: 514px; }
.n4 { left: 864px; top: 962px; width: 455px; }
.frame { position: absolute; border: 6px solid #f00; }
.f1 { left: 7px; top: 127px; width: 74px; height: 31px; }
.f2 { left: 7px; top: 208px; width: 281px; height: 31px; }
.f3 { left: 950px; top: 201px; width: 231px; height: 172px; }
.f4 { left: 470px; top: 558px; width: 225px; height: 426px; }
.f5 { left: 1359px; top: 219px; width: 554px; height: 464px; }
.f6 { left: 1359px; top: 873px; width: 554px; height: 58px; }
.arrows { position: absolute; inset: 0; width: 100%; height: 100%; }
```
